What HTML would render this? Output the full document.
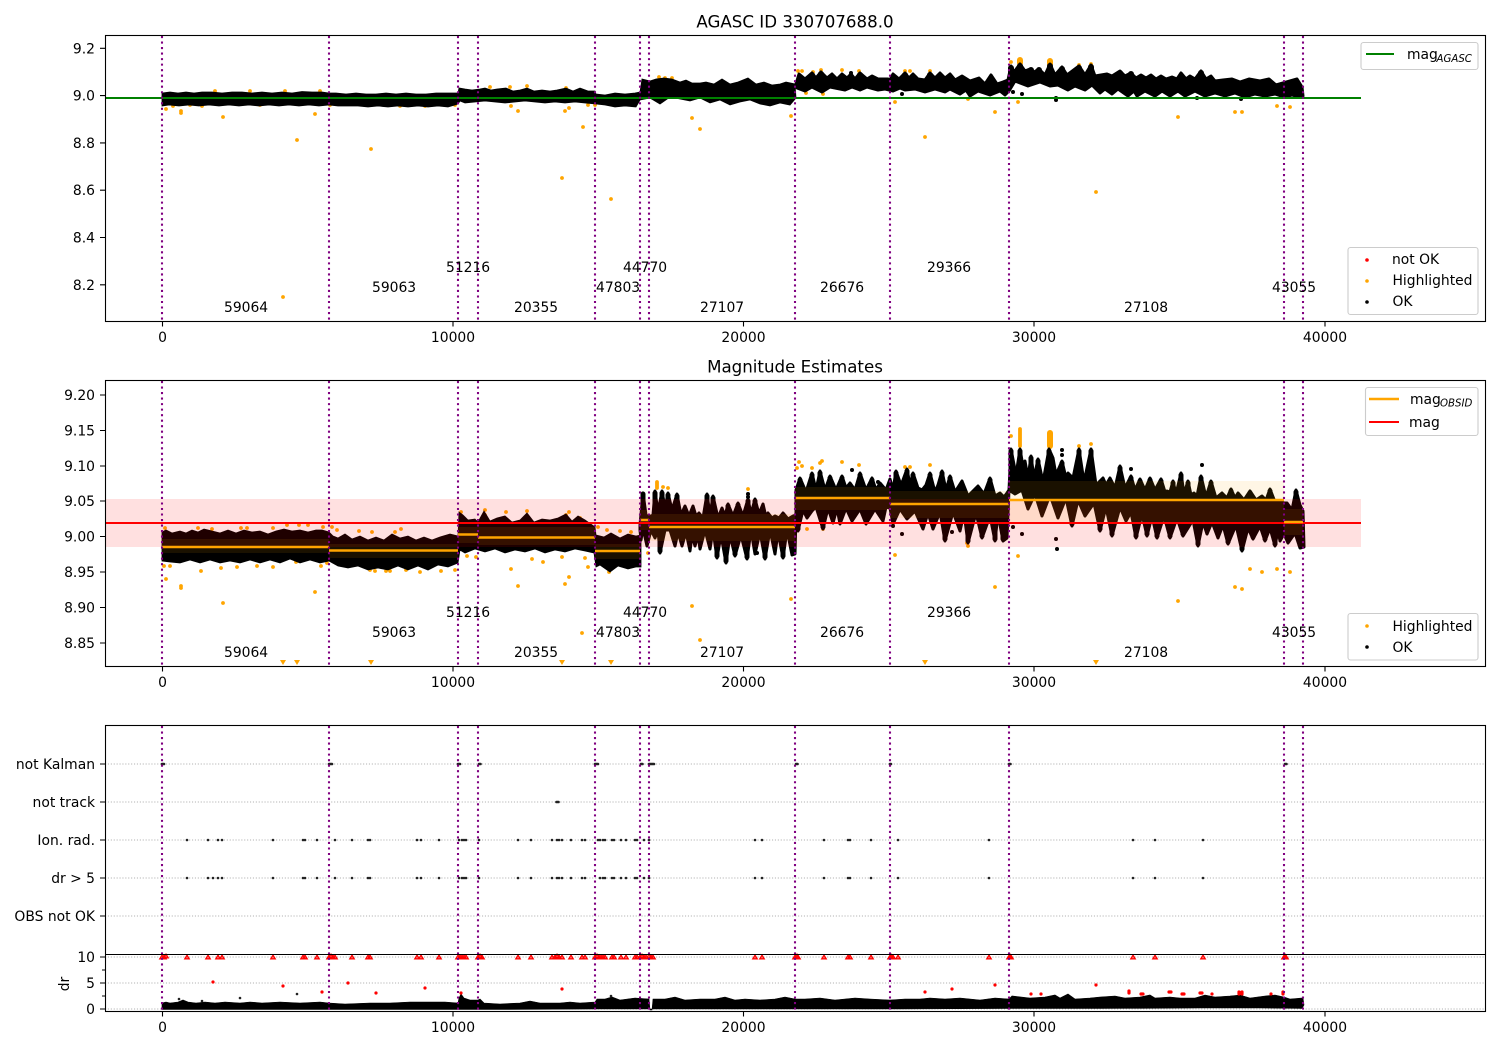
<!DOCTYPE html>
<html><head><meta charset="utf-8"><style>
html,body{margin:0;padding:0;background:#fff;width:1500px;height:1050px;overflow:hidden}
svg{display:block}
text{font-family:"DejaVu Sans","Liberation Sans",sans-serif;font-size:13.89px;fill:#000}
.r{text-anchor:end}.m{text-anchor:middle}
.sub{font-size:10.2px;font-style:italic}
.v{fill:none;stroke:#800080;stroke-width:2.08;stroke-dasharray:2.08 3.44}
.o{fill:none;stroke:#ffa500;stroke-width:3.8;stroke-linecap:round}
.k{fill:none;stroke:#000;stroke-width:4;stroke-linecap:round}
.d{fill:none;stroke:#222;stroke-width:2.6;stroke-linecap:round}
.g{fill:none;stroke:#b0b0b0;stroke-width:1.1;stroke-dasharray:1.1 1.8}
.s{fill:none;stroke:#000;stroke-width:1.1}
.t{fill:none;stroke:#000;stroke-width:1.1}
.l{fill:#fff;fill-opacity:.8;stroke:#ccc;stroke-width:1.1}
.b{fill:#000;stroke:#000;stroke-width:3;stroke-linejoin:round}
.c{fill:none;stroke:#000;stroke-width:5;stroke-linecap:round}
</style></head><body>
<svg width="1500" height="1050" viewBox="0 0 1500 1050" xmlns="http://www.w3.org/2000/svg">
<defs><marker id="tri" markerUnits="userSpaceOnUse" markerWidth="8" markerHeight="8" refX="4" refY="4" overflow="visible"><path d="M4 2.1L6.3 5.9H1.7Z" fill="#f00" fill-opacity=".55" stroke="#f00" stroke-width="1.2"/></marker></defs>
<rect width="1500" height="1050" fill="#fff"/>

<!-- PANEL 1 -->
<path class="o" d="M166 109h.01M181 111h.01M181 113h.01M223 117h.01M202 106h.01M297 140h.01M315 114h.01M371 149h.01M511 106h.01M518 111h.01M565 111h.01M569 108h.01M583 127h.01M562 178h.01M588 105h.01M611 199h.01M692 118h.01M700 129h.01M791 116h.01M895 102h.01M925 137h.01M995 112h.01M1018 102h.01M1178 117h.01M1235 112h.01M1242 112h.01M1277 106h.01M1290 107h.01M1096 192h.01M283 297h.01M173 106h.01M190 105h.01M260 105h.01M330 105h.01M400 106h.01M425 106h.01M455 105h.01M595 105h.01M806 93h.01M823 94h.01M968 99h.01M1011 62h.01M798 71h.01M802 71h.01M813 72h.01M821 70h.01M842 70h.01M859 71h.01M905 71h.01M910 71h.01M930 71h.01M1079 65h.01M1091 64h.01M215 91h.01M250 91h.01M285 91h.01M320 91h.01M490 87h.01M510 87h.01M527 86h.01M566 88h.01M659 77h.01M665 78h.01M672 78h.01"/>
<path class="o" style="stroke-width:6" d="M1020 60v3M1050 61v3"/>
<path d="M162 93L170 92 178 93 186 92 194 93 202 92 212 92 222 93 232 92 242 92 252 93 262 92 272 93 282 92 292 93 302 91.5 312 92 322 92 329 93 336 93 346 94 356 93 366 94 376 94 386 93 396 94 406 93 416 94 426 94 436 93 446 93 458 93 459 88 465 89 472 90 480 89 485 88 491 90 497 89 506 88 513 91 520 90 527 88 534 91 542 90 550 91 557 90 566 88 573 91 580 88 588 91 595 91 596 94 605 95 615 93 625 94 635 93 640 92 642 79 650 81 656 79 664 78 672 79 680 82 686 80 692 83 700 83 706 82 714 84 722 79 730 84 738 82 748 78 756 84 764 82 772 85 780 84 786 82 795 84L796 98 790 105 780 103 770 106 760 104 750 100 740 102 730 105 720 100 710 103 700 98 690 101 680 99 670 97 660 104 650 98 645 99 640 100 636 107 625 106 615 107 605 105 596 104 585 103 575 102 565 103 555 102 545 103 535 102 525 101 515 102 505 103 495 102 485 101 475 102 465 103 460 101 458 104 448 107 438 106 428 107 418 106 408 107 398 106 388 107 378 106 368 107 358 106 348 106 338 106 329 105 319 106 309 105 299 106 289 105 279 106 269 105 259 106 249 105 239 106 229 105 219 106 209 105 199 106 189 105 179 106 169 105 162 106Z" fill="#000" stroke="#000" stroke-width=".8"/>
<path class="b" d="M796 84L799 74 805 79 812 73 816 78 821 72 827 78 832 74 837 79 842 74 847 78 851 74 855 79 860 73 867 79 872 76 878 79 888 79 890 80 893 74 899 79 905 73 909 78 913 74 918 79 925 80 930 73 935 78 940 73 945 78 950 74 955 80 962 76 970 81 979 78 985 84 991 75 997 84 1003 82 1008 80 1011 66 1014 72 1020 64 1025 71 1030 69 1034 72 1039 69 1045 75 1050 64 1055 75 1062 67 1067 75 1079 66 1085 75 1091 65 1095 76 1107 74 1112 76 1120 71 1125 76 1131 73 1136 78 1141 75 1146 78 1151 75 1156 79 1161 76 1166 79 1172 77 1177 79 1181 73 1186 79 1190 76 1195 79 1201 71 1206 79 1211 76 1215 81 1223 80 1232 79 1240 82 1249 79 1260 81 1269 79 1276 85 1283 83 1290 81 1297 79 1302 87L1303 96 1300 97 1292 95 1284 97 1275 94 1265 96 1255 94 1245 97 1235 93 1225 96 1215 93 1205 96 1195 91 1185 96 1178 91 1170 96 1162 91 1155 96 1145 91 1137 96 1134 91 1128 96 1118 89 1112 94 1105 89 1100 93 1092 85 1085 90 1075 86 1068 90 1058 85 1050 86 1040 82 1028 86 1015 81 1009 91 1005 95 1000 91 990 95 978 91 970 96 966 90 960 94 950 89 945 92 935 89 925 92 915 89 905 90 900 88 893 91 885 89 878 90 867 87 860 90 852 87 845 90 830 87 822 92 812 87 805 91 797 88Z"/>
<path class="c" style="stroke-width:6" d="M1011 68v12M1020 66v14M1031 70v10M1039 70v10M1050 66v14M1062 69v10M1079 68v12M1091 67v12M1120 73v10M1131 74v8M1201 73v8M812 75v10M821 74v10M860 75v10M905 75v10M930 75v10"/>
<path class="k" d="M902 94h.01M1013 92h.01M1022 94h.01M1056 98h.01M1056 100h.01M851 73h.01M1241 99h.01M1197 98h.01"/>
<path d="M105 98H1361" stroke="#008000" stroke-width="2.08" fill="none"/>
<path class="v" d="M162 36V321M329 36V321M458 36V321M478 36V321M595 36V321M640 36V321M649 36V321M795 36V321M890 36V321M1009 36V321M1284 36V321M1303 36V321"/>
<g>
<text x="224" y="312">59064</text><text x="372" y="292">59063</text><text x="446" y="272">51216</text><text x="514" y="312">20355</text><text x="596" y="292">47803</text><text x="623" y="272">44770</text><text x="700" y="312">27107</text><text x="820" y="292">26676</text><text x="927" y="272">29366</text><text x="1124" y="312">27108</text><text x="1272" y="292">43055</text>
</g>
<rect x="105.5" y="35.5" width="1380" height="286" class="s"/>
<path class="t" d="M100 48.3h5M100 95.6h5M100 142.9h5M100 190.2h5M100 237.5h5M100 284.8h5M162.5 321.5v5M453 321.5v5M743.5 321.5v5M1034 321.5v5M1325 321.5v5"/>
<text class="r" x="95" y="53.3">9.2</text><text class="r" x="95" y="100.6">9.0</text><text class="r" x="95" y="147.9">8.8</text><text class="r" x="95" y="195.2">8.6</text><text class="r" x="95" y="242.5">8.4</text><text class="r" x="95" y="289.8">8.2</text>
<text class="m" x="162.5" y="342">0</text><text class="m" x="453" y="342">10000</text><text class="m" x="743.5" y="342">20000</text><text class="m" x="1034" y="342">30000</text><text class="m" x="1325" y="342">40000</text>
<text class="m" x="795" y="27.5" style="font-size:16.67px">AGASC ID 330707688.0</text>
<rect x="1361" y="42.5" width="117" height="27" rx="2.5" class="l"/>
<path d="M1366 54H1394" stroke="#008000" stroke-width="2.08"/>
<text x="1407" y="59">mag</text><text x="1436.5" y="62" class="sub">AGASC</text>
<rect x="1348" y="247.5" width="130" height="67" rx="2.5" class="l"/>
<path d="M1367 260h.01" stroke="#f00" stroke-width="3.6" stroke-linecap="round"/><path d="M1367 281h.01" stroke="#ffa500" stroke-width="3.6" stroke-linecap="round"/><path d="M1367 302h.01" stroke="#000" stroke-width="3.6" stroke-linecap="round"/>
<text x="1392" y="264">not OK</text><text x="1392.5" y="285">Highlighted</text><text x="1392.5" y="306">OK</text>

<!-- PANEL 2 -->
<path class="o" d="M166 579h.01M164 566h.01M170 566h.01M181 586h.01M181 588h.01M201 571h.01M221 568h.01M237 567h.01M257 566h.01M273 567h.01M315 592h.01M296 562h.01M321 566h.01M327 563h.01M165 528h.01M198 528h.01M212 529h.01M241 528h.01M247 528h.01M273 528h.01M287 525h.01M299 525h.01M308 525h.01M323 527h.01M332 527h.01M337 530h.01M359 531h.01M372 532h.01M401 529h.01M395 532h.01M370 570h.01M375 571h.01M386 571h.01M390 571h.01M406 570h.01M420 572h.01M441 571h.01M455 570h.01M223 603h.01M461 512h.01M467 556h.01M476 557h.01M485 510h.01M485 515h.01M506 512h.01M527 511h.01M566 515h.01M569 512h.01M580 518h.01M511 569h.01M518 586h.01M532 559h.01M543 562h.01M562 557h.01M565 584h.01M569 577h.01M585 558h.01M588 567h.01M582 633h.01M598 527h.01M607 530h.01M620 531h.01M631 532h.01M609 572h.01M748 489h.01M648 553h.01M692 606h.01M700 640h.01M791 599h.01M895 555h.01M995 587h.01M1018 556h.01M1178 601h.01M1235 587h.01M1242 589h.01M1250 569h.01M1262 572h.01M663 487h.01M668 488h.01M799 462h.01M797 468h.01M802 466h.01M812 468h.01M820 463h.01M822 461h.01M842 462h.01M859 465h.01M905 467h.01M910 467h.01M930 465h.01M807 529h.01M823 529h.01M967 543h.01M968 546h.01M1011 436h.01M1079 446h.01M1091 444h.01M1277 569h.01M1290 572h.01"/>
<path class="o" d="M657 482v6M1020 429v17"/>
<path class="o" style="stroke-width:6" d="M1050 433v13"/>
<path d="M162 532L166 530 172 533 180 531 186 533 192 530 198 532 204 529 212 531 220 533 228 530 236 533 244 530 252 532 260 531 268 534 276 531 284 529 292 531 300 530 308 532 316 530 322 530 329 532 333 536 338 538 345 534 352 539 360 536 368 540 376 537 384 540 392 534 400 538 408 536 416 540 424 537 432 540 440 537 450 534 458 536 459 512 463 515 468 520 475 519 478 522 484 511 490 521 497 518 505 516 512 522 520 520 527 513 534 522 542 519 550 520 558 518 566 514 572 521 578 516 585 520 595 527 596 535 604 537 611 533 620 538 628 534 636 536 641 535 641 567 636 567 628 569 618 566 610 572 600 565 596 567 594 553 585 551 575 549 565 552 555 550 545 553 535 549 525 552 515 550 505 553 495 549 485 552 475 549 465 553 460 550 458 563 448 567 438 565 428 570 418 566 408 570 398 566 388 570 378 568 368 570 358 566 348 568 338 566 329 561 320 563 310 560 300 563 290 559 280 563 270 560 260 563 250 560 240 563 230 561 220 563 210 560 200 563 190 560 180 563 170 562 162 561Z" fill="#000" stroke="#000" stroke-width=".8"/>
<path class="b" d="M640 525L643 493 646 515 649 517 653 515 655 491 658 512 662 491 665 508 668 493 672 510 677 494 681 515 685 506 689 516 693 506 696 516 699 513 703 518 707 494 710 515 713 496 718 518 722 508 725 516 728 504 733 516 738 503 743 516 748 499 751 514 755 499 759 514 763 504 766 517 768 513 772 518 775 516 779 518 783 513 788 519 793 516 796 515 796 490 800 478 806 492 812 473 816 490 820 471 825 490 830 476 836 490 842 476 846 488 850 483 855 490 860 473 866 490 872 478 876 490 880 483 886 490 890 479 893 490 896 471 901 485 903 480 907 469 910 485 913 473 918 488 922 490 926 485 930 473 935 492 938 485 942 471 946 490 950 476 955 492 962 481 968 496 972 492 978 486 984 494 990 478 995 496 1000 493 1004 497 1007 493 1009 490 1011 449 1016 475 1020 449 1024 472 1025 461 1028 478 1031 456 1034 478 1038 459 1043 482 1049 449 1053 458 1056 475 1062 461 1066 478 1068 473 1073 478 1079 449 1084 482 1091 449 1096 485 1103 478 1106 485 1110 478 1115 488 1120 466 1125 488 1131 476 1135 490 1140 479 1145 490 1150 478 1155 490 1161 479 1165 492 1167 491 1170 492 1173 481 1176 494 1181 473 1184 494 1188 481 1191 495 1194 493 1197 496 1201 476 1206 497 1211 481 1216 498 1222 493 1227 498 1231 489 1235 498 1238 493 1244 500 1250 491 1256 500 1262 496 1266 500 1270 489 1275 502 1280 501 1284 503 1287 503 1292 510 1296 490 1300 505 1303 511 1304 547 1300 548 1295 533 1288 543 1284 534 1280 541 1278 530 1275 546 1270 528 1265 541 1260 526 1253 539 1248 528 1242 551 1236 525 1228 544 1223 525 1218 538 1212 522 1207 534 1203 522 1198 546 1193 520 1188 528 1183 536 1177 518 1170 538 1164 516 1157 538 1152 516 1147 536 1142 514 1136 538 1131 512 1126 521 1120 507 1112 536 1106 507 1100 531 1094 503 1085 516 1078 500 1072 526 1066 498 1058 518 1050 495 1042 516 1035 494 1028 509 1022 490 1015 494 1009 490 1007 538 1003 541 998 514 995 541 990 516 982 538 976 513 968 543 964 513 960 531 953 512 945 541 940 512 933 529 928 513 923 529 915 511 907 519 900 509 893 524 890 508 886 507 883 521 875 509 866 524 860 509 852 521 846 508 840 524 837 508 833 523 828 508 823 529 816 507 812 511 807 518 803 510 798 531 796 515 795 554 792 555 787 530 783 558 778 532 775 554 770 530 765 559 760 532 755 554 751 530 747 559 741 535 735 556 730 535 726 563 721 535 717 558 713 530 710 549 705 530 700 549 698 535 695 546 692 535 690 551 686 532 682 546 678 532 675 546 670 530 665 530 660 553 658 530 655 538 651 530 647 546 643 528 641 540 640 530Z"/>
<path class="c" d="M643 494v22M655 493v22M662 493v20M668 495v18M677 496v20M707 496v22M713 498v20M728 506v12M738 505v12M748 501v15M755 501v15M800 480v14M812 475v17M820 473v19M830 478v14M842 478v14M860 475v17M872 480v12M896 473v15M907 471v17M913 475v15M930 475v17M942 473v17M950 478v14M990 480v16M1011 451v28M1020 451v28M1031 458v22M1038 461v21M1049 451v30M1062 463v17M1079 451v30M1091 451v33M1120 468v20M1131 478v12M1140 481v10M1150 480v11M1161 481v11M1173 483v11M1181 475v19M1188 483v12M1201 478v19M1211 483v15M1231 491v8M1250 493v8M1270 491v11M1296 492v14M660 551v-20M717 556v-22M726 561v-25M735 554v-18M747 557v-23M765 557v-25M783 556v-23M798 529v-14M823 527v-18M945 539v-25M968 541v-27M982 536v-22M995 539v-24M1003 539v-20M1072 524v-24M1100 529v-25M1112 534v-26M1136 536v-23M1147 534v-19M1157 536v-20M1170 536v-20M1183 534v-16M1198 544v-23M1228 542v-17M1242 549v-23M1253 537v-10M1265 539v-12M1275 544v-16M1300 545v-15"/>
<path class="k" d="M1013 527h.01M1022 534h.01M1056 539h.01M1057 549h.01M1202 465h.01M1062 450h.01M1062 455h.01M1131 469h.01M852 470h.01M748 494h.01M748 497h.01M902 534h.01M893 526h.01M952 532h.01M878 482h.01M757 553h.01"/>
<rect x="105.5" y="499" width="1255.5" height="48" fill="#f00" fill-opacity=".12"/>
<g fill="#ffa500" fill-opacity=".1">
<rect x="162" y="539" width="167" height="14"/><rect x="329" y="544" width="129" height="14"/><rect x="458" y="527" width="20" height="16"/><rect x="478" y="527" width="117" height="18"/><rect x="595" y="544" width="45" height="15"/><rect x="640" y="510" width="9" height="20"/><rect x="649" y="514" width="146" height="27"/><rect x="795" y="487" width="95" height="23"/><rect x="890" y="491" width="119" height="27"/><rect x="1009" y="481" width="275" height="41"/><rect x="1284" y="509" width="19" height="26"/>
</g>
<path d="M105 523H1361" stroke="#f00" stroke-width="2.08" fill="none"/>
<path d="M162 547H329M329 550.5H458M458 534.5H478M478 537.5H595M595 551H640M640 520H649M649 527H795M795 498H890M890 504H1009M1009 500H1284M1284 522H1303" stroke="#ffa500" stroke-width="2.6" fill="none"/>
<path class="v" d="M162 381V666M329 381V666M458 381V666M478 381V666M595 381V666M640 381V666M649 381V666M795 381V666M890 381V666M1009 381V666M1284 381V666M1303 381V666"/>
<path fill="#ffa500" d="M280 660h6l-3 5zM294 660h6l-3 5zM368 660h6l-3 5zM559 660h6l-3 5zM608 660h6l-3 5zM922 660h6l-3 5zM1093 660h6l-3 5z"/>
<g>
<text x="224" y="657">59064</text><text x="372" y="637">59063</text><text x="446" y="617">51216</text><text x="514" y="657">20355</text><text x="596" y="637">47803</text><text x="623" y="617">44770</text><text x="700" y="657">27107</text><text x="820" y="637">26676</text><text x="927" y="617">29366</text><text x="1124" y="657">27108</text><text x="1272" y="637">43055</text>
</g>
<rect x="105.5" y="380.5" width="1380" height="286" class="s"/>
<path class="t" d="M100 395h5M100 430.5h5M100 466h5M100 501h5M100 536.5h5M100 572h5M100 607.5h5M100 643h5M162.5 666.5v5M453 666.5v5M743.5 666.5v5M1034 666.5v5M1325 666.5v5"/>
<text class="r" x="95" y="400">9.20</text><text class="r" x="95" y="435.5">9.15</text><text class="r" x="95" y="471">9.10</text><text class="r" x="95" y="506">9.05</text><text class="r" x="95" y="541.5">9.00</text><text class="r" x="95" y="577">8.95</text><text class="r" x="95" y="612.5">8.90</text><text class="r" x="95" y="648">8.85</text>
<text class="m" x="162.5" y="687">0</text><text class="m" x="453" y="687">10000</text><text class="m" x="743.5" y="687">20000</text><text class="m" x="1034" y="687">30000</text><text class="m" x="1325" y="687">40000</text>
<text class="m" x="795" y="372.5" style="font-size:16.67px">Magnitude Estimates</text>
<rect x="1365.5" y="387.5" width="112.5" height="48" rx="2.5" class="l"/>
<path d="M1369 399H1399" stroke="#ffa500" stroke-width="2.6"/><path d="M1369 422H1399" stroke="#f00" stroke-width="2.08"/>
<text x="1410" y="404">mag</text><text x="1440" y="406.5" class="sub">OBSID</text><text x="1409" y="427">mag</text>
<rect x="1348" y="613.5" width="130" height="46.5" rx="2.5" class="l"/>
<path d="M1367 626h.01" stroke="#ffa500" stroke-width="3.6" stroke-linecap="round"/><path d="M1367 647h.01" stroke="#000" stroke-width="3.6" stroke-linecap="round"/>
<text x="1392.5" y="631">Highlighted</text><text x="1392.5" y="652">OK</text>

<!-- PANEL 3 -->
<path class="g" d="M105 764H1485M105 802H1485M105 840H1485M105 878H1485M105 916H1485M105 957H1485M105 983H1485M105 1009H1485"/>
<path class="d" d="M162 764h2M329 764h3M458 764h2M479 764h1.5M595 764h3M641 764h1.5M649 764h5M796 764h1.5M890 764h1M1009 764h1.5M1285 764h1.5M556.5 802h2"/>
<path class="d" d="M187 840h.01M208 840h.01M218 840h.01M222 840h.01M273 840h.01M303 840h.01M305 840h.01M317 840h.01M335 840h.01M352 840h.01M368 840h.01M370 840h.01M417 840h.01M421 840h.01M439 840h.01M459 840h.01M462 840h.01M464 840h.01M466 840h.01M479 840h.01M518 840h.01M531 840h.01M552 840h.01M557 840h.01M559 840h.01M562 840h.01M571 840h.01M582 840h.01M585 840h.01M598 840h.01M600 840h.01M603 840h.01M605 840h.01M612 840h.01M614 840h.01M621 840h.01M626 840h.01M635 840h.01M637 840h.01M644 840h.01M649 840h.01M755 840h.01M762 840h.01M824 840h.01M848 840h.01M850 840h.01M871 840h.01M898 840h.01M989 840h.01M1133 840h.01M1155 840h.01M1203 840h.01"/>
<path class="d" d="M187 878h.01M208 878h.01M213 878h.01M218 878h.01M222 878h.01M273 878h.01M303 878h.01M305 878h.01M317 878h.01M335 878h.01M352 878h.01M368 878h.01M370 878h.01M417 878h.01M421 878h.01M439 878h.01M459 878h.01M462 878h.01M464 878h.01M466 878h.01M479 878h.01M518 878h.01M531 878h.01M552 878h.01M557 878h.01M559 878h.01M562 878h.01M571 878h.01M582 878h.01M585 878h.01M600 878h.01M603 878h.01M605 878h.01M612 878h.01M614 878h.01M621 878h.01M626 878h.01M635 878h.01M637 878h.01M644 878h.01M649 878h.01M755 878h.01M762 878h.01M824 878h.01M848 878h.01M850 878h.01M871 878h.01M898 878h.01M989 878h.01M1133 878h.01M1155 878h.01M1203 878h.01"/>
<polyline fill="none" stroke="none" style="marker:url(#tri)" points="162,957 164,957 166,956 187,957 208,957 218,957 222,957 273,957 303,957 305,957 317,957 329,957 331,956 333,957 335,957 352,957 368,957 370,957 417,957 421,957 439,957 458,957 460,957 462,957 464,957 466,957 478,957 480,956 482,957 518,957 531,957 552,957 555,957 557,956 559,957 562,957 571,957 582,957 585,957 595,957 597,956 599,957 601,957 603,957 605,957 612,957 614,957 621,957 626,957 635,957 637,957 640,957 642,956 644,957 646,957 649,956 651,957 653,957 755,957 762,957 795,957 797,956 798,957 824,957 848,957 850,957 871,957 890,957 891,956 893,957 898,957 989,957 1009,957 1010,956 1011,957 1133,957 1155,957 1203,957 1284,957 1285,956 1286,957"/>
<path d="M162 1003L166 1002 170 1003 178 1002 183 1000 188 1002 196 1003 205 1002 215 1003 225 1002 240 1003 250 1002 262 1003 280 1002 300 1003 320 1002 329 1003 345 1004 370 1003 390 1003 410 1002 430 1002 445 1002 458 1003 459 998 461 994 464 998 470 1000 478 1000 480 999 484 1003 500 1004 520 1003 530 1001 540 1003 560 1003 570 1002 580 1003 595 1002 597 999 605 999 612 997 620 1000 635 998 649 999 650 1010 652 1010 653 999 665 999 675 997 685 1000 700 999 715 999 725 997 735 1000 745 999 760 1000 775 999 785 997 795 999 805 999 820 998 835 1000 845 999 855 998 870 999 890 1000 905 999 920 999 930 998 945 999 960 998 980 1000 995 998 1009 999 1012 996 1030 998 1045 997 1055 995 1060 998 1068 994 1075 999 1090 998 1100 997 1115 996 1125 998 1140 997 1150 995 1155 998 1170 997 1180 998 1195 998 1205 995 1215 997 1230 996 1240 995 1250 998 1265 996 1275 995 1284 997 1290 999 1303 998 1304 1005 1302 1008.5 1260 1008 1200 1008 1100 1008.5 1010 1008.5 900 1009 800 1009 700 1009 600 1009 500 1009.5 400 1009.5 300 1009.5 200 1009.5 162 1009.5Z" fill="#000" stroke="#000" stroke-width=".6"/>
<path fill="none" stroke="#f00" stroke-width="3.2" stroke-linecap="round" d="M213 982h.01M283 986h.01M322 992h.01M348 983h.01M376 993h.01M425 988h.01M461 993h.01M562 989h.01M925 992h.01M952 989h.01M995 985h.01M1096 985h.01M1031 994h.01M1041 994h.01M1129 991v2M1141 994h2M1169 992h2M1182 994h2M1200 993h2M1212 994h.01M1239 992v2M1242 992v2M1271 994h.01M1283 992v2"/>
<path class="d" d="M240 998h.01M297 994h.01M179 999h.01M202 1001h.01M611 996h.01"/>
<path class="v" d="M162 726V1011M329 726V1011M458 726V1011M478 726V1011M595 726V1011M640 726V1011M649 726V1011M795 726V1011M890 726V1011M1009 726V1011M1284 726V1011M1303 726V1011"/>
<rect x="105.5" y="725.5" width="1380" height="286" class="s"/>
<path class="s" d="M105 954.5H1486"/>
<path class="t" d="M100 764h5M100 802h5M100 840h5M100 878h5M100 916h5M100 957h5M100 983h5M100 1009h5M102 970h3M102 996h3M162.5 1011.5v5M453 1011.5v5M743.5 1011.5v5M1034 1011.5v5M1325 1011.5v5"/>
<text class="r" x="95" y="769">not Kalman</text><text class="r" x="95" y="807">not track</text><text class="r" x="95" y="845">Ion. rad.</text><text class="r" x="95" y="883">dr &gt; 5</text><text class="r" x="95" y="921">OBS not OK</text>
<text class="r" x="95" y="962">10</text><text class="r" x="95" y="988">5</text><text class="r" x="95" y="1014">0</text>
<text class="m" transform="translate(69,984) rotate(-90)" x="0" y="0">dr</text>
<text class="m" x="162.5" y="1032">0</text><text class="m" x="453" y="1032">10000</text><text class="m" x="743.5" y="1032">20000</text><text class="m" x="1034" y="1032">30000</text><text class="m" x="1325" y="1032">40000</text>
</svg>
</body></html>
